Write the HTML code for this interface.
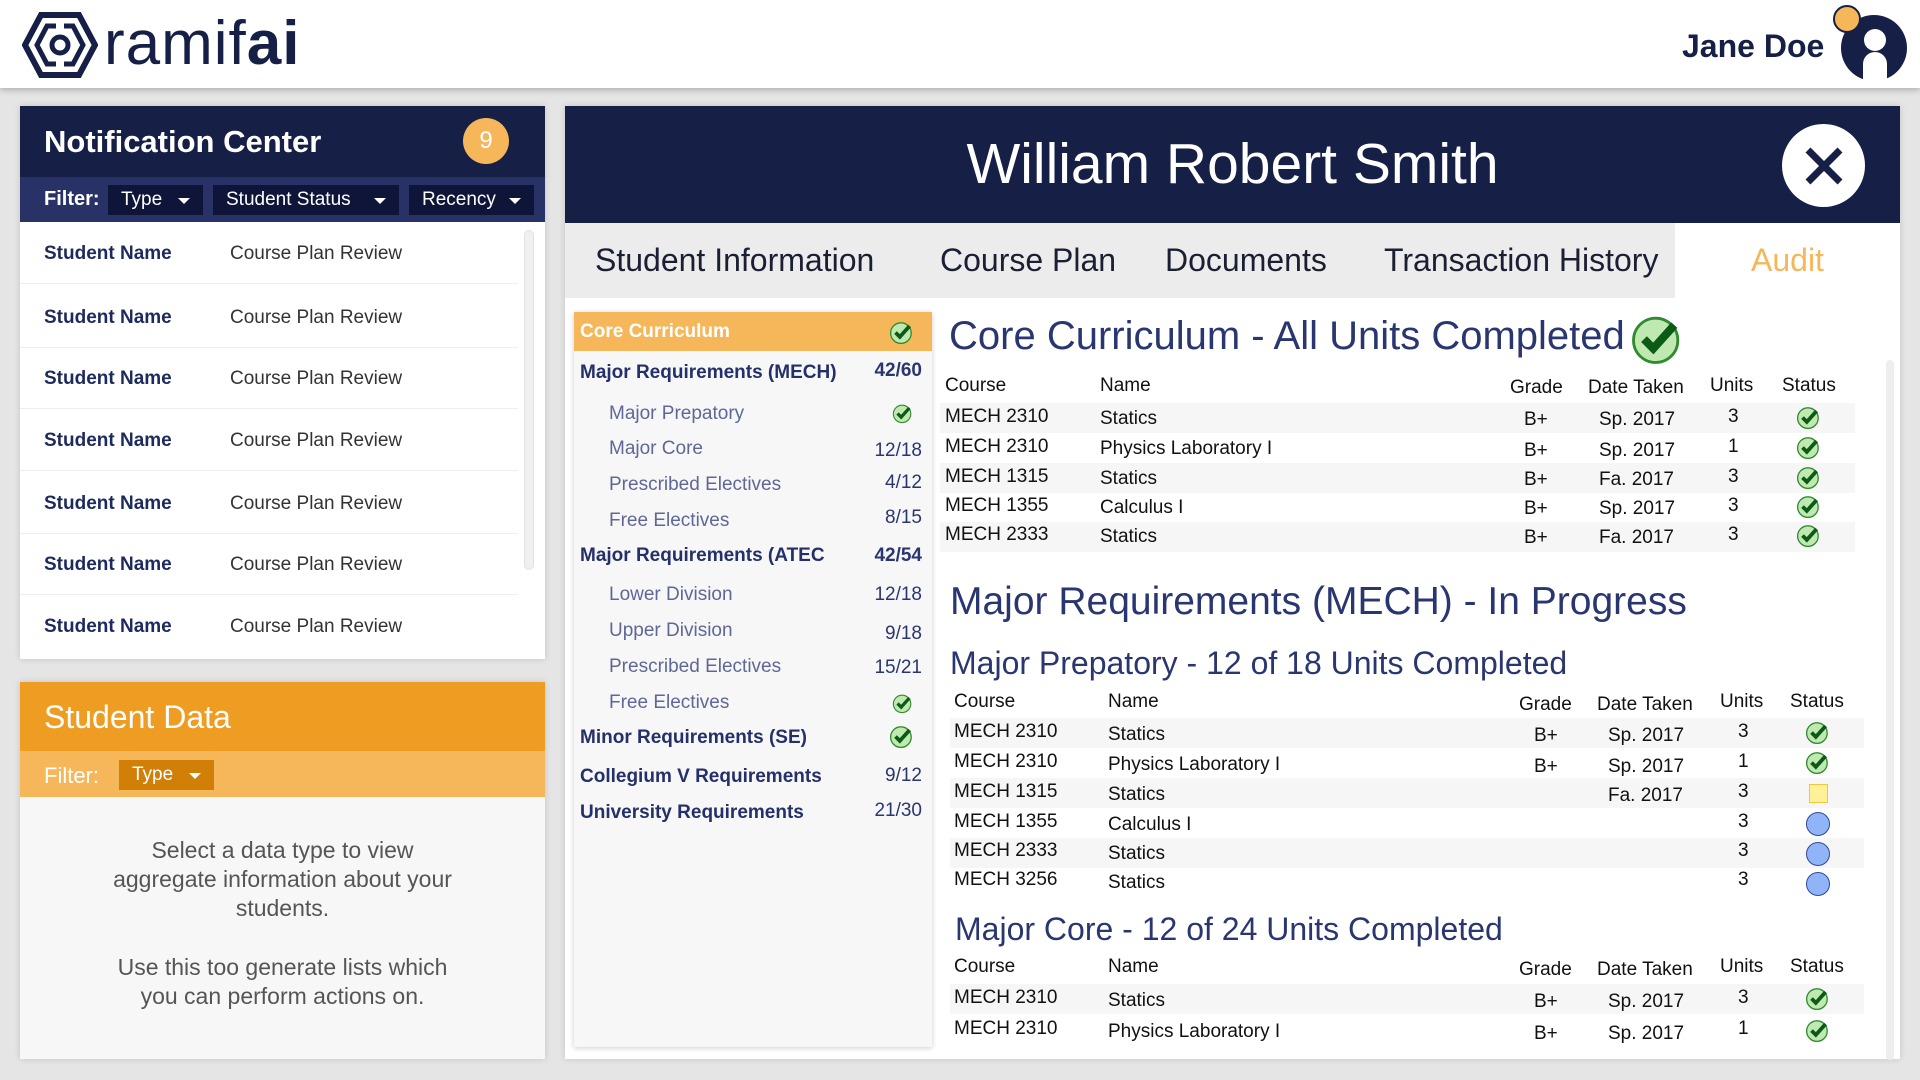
<!DOCTYPE html>
<html><head><meta charset="utf-8"><style>
*{margin:0;padding:0;box-sizing:border-box}
body{width:1920px;height:1080px;background:#e5e5e5;font-family:"Liberation Sans",sans-serif;position:relative;overflow:hidden}
.a{position:absolute;white-space:nowrap}
.hdr{left:0;top:0;width:1920px;height:88px;background:#fff;box-shadow:0 2px 6px rgba(0,0,0,.25)}
.dd{position:absolute;background:#0e1538;color:#fff;font-size:19px;height:30px;line-height:30px;padding-left:13px}
.dd:after{content:"";position:absolute;right:13px;top:13px;border:6px solid transparent;border-top:6px solid #fff;border-bottom:0}
.nr{position:absolute;left:20px;width:498px;height:62px;border-bottom:1px solid #eee;font-size:19px}
.nr b{position:absolute;left:24px;top:21px;color:#1d2a5e}
.nr span{position:absolute;left:210px;top:21px;color:#333}
.sb{position:absolute;font-size:19px;white-space:nowrap}
.bold{left:580px;color:#24306a;font-weight:bold}
.sub{left:609px;color:#5f6797}
.num{right:998px;color:#2a3670;text-align:right}
.t{position:absolute;font-size:19px;color:#111;white-space:nowrap}
.row{position:absolute;height:30px;background:#f6f6f6}
.h1{position:absolute;color:#2a3670;font-size:40px;white-space:nowrap}
.h2{position:absolute;color:#2a3670;font-size:32px;white-space:nowrap}
.tab{position:absolute;font-size:32px;color:#1a1f33;top:242px;white-space:nowrap}
</style></head><body>
<div class="a hdr"></div>
<svg class="a" style="left:22px;top:12px" width="76" height="66" viewBox="0 0 76 66"><polygon points="19,3 57,3 73,33 57,63 19,63 3,33" fill="none" stroke="#161f45" stroke-width="6"/><polygon points="25,14 51,14 61,33 51,52 25,52 15,33" fill="none" stroke="#161f45" stroke-width="5"/><circle cx="38" cy="33" r="8" fill="none" stroke="#161f45" stroke-width="5"/><rect x="34" y="10" width="8" height="10" fill="#fff"/><rect x="34" y="46" width="8" height="10" fill="#fff"/></svg>
<div class="a" style="left:104px;top:8px;font-size:62px;color:#161f45;letter-spacing:1px"><span style="font-weight:300">ramif</span><b>ai</b></div>
<div class="a" style="left:1682px;top:28px;font-size:32px;font-weight:bold;color:#161f45">Jane Doe</div>
<svg class="a" style="left:1832px;top:4px" width="80" height="78" viewBox="0 0 80 78"><circle cx="42" cy="44" r="33" fill="#161f45"/><circle cx="43" cy="36" r="11" fill="#fff"/><path d="M31 78V60a12 12 0 0 1 24 0V78z" fill="#fff"/><circle cx="15" cy="15" r="13" fill="#f5b75a" stroke="#161f45" stroke-width="2"/></svg>

<!-- notification -->
<div class="a" style="left:20px;top:106px;width:525px;height:553px;background:#fff;box-shadow:0 0 6px rgba(0,0,0,.15)"></div>
<div class="a" style="left:20px;top:106px;width:525px;height:71px;background:#161f45"></div>
<div class="a" style="left:44px;top:124px;font-size:31px;color:#fff;font-weight:bold">Notification Center</div>
<div class="a" style="left:463px;top:118px;width:46px;height:46px;border-radius:50%;background:#f5b75a;color:#fff;font-size:24px;text-align:center;line-height:46px">9</div>
<div class="a" style="left:20px;top:177px;width:525px;height:45px;background:#283266"></div>
<div class="a" style="left:44px;top:188px;font-size:20px;color:#fff;font-weight:bold">Filter:</div>
<div class="dd" style="left:108px;top:185px;width:95px">Type</div>
<div class="dd" style="left:213px;top:185px;width:186px">Student Status</div>
<div class="dd" style="left:409px;top:185px;width:125px">Recency</div>
<div class="nr" style="top:222px"><b>Student Name</b><span>Course Plan Review</span></div>
<div class="nr" style="top:286px"><b>Student Name</b><span>Course Plan Review</span></div>
<div class="nr" style="top:347px"><b>Student Name</b><span>Course Plan Review</span></div>
<div class="nr" style="top:409px"><b>Student Name</b><span>Course Plan Review</span></div>
<div class="nr" style="top:472px"><b>Student Name</b><span>Course Plan Review</span></div>
<div class="nr" style="top:533px"><b>Student Name</b><span>Course Plan Review</span></div>
<div class="nr" style="top:595px;border:0"><b>Student Name</b><span>Course Plan Review</span></div>
<div class="a" style="left:524px;top:230px;width:10px;height:340px;border-radius:5px;background:#f0f0f0;border:1px solid #e2e2e2"></div>

<!-- student data -->
<div class="a" style="left:20px;top:682px;width:525px;height:377px;background:#f7f7f7;box-shadow:0 0 6px rgba(0,0,0,.15)"></div>
<div class="a" style="left:20px;top:682px;width:525px;height:69px;background:#ef9c22"></div>
<div class="a" style="left:44px;top:699px;font-size:32px;color:#fff">Student Data</div>
<div class="a" style="left:20px;top:751px;width:525px;height:46px;background:#f5b75a"></div>
<div class="a" style="left:44px;top:763px;font-size:22px;color:#fff">Filter:</div>
<div class="dd" style="left:119px;top:760px;width:95px;background:#d17f07">Type</div>
<div class="a" style="left:20px;top:836px;width:525px;text-align:center;font-size:23px;color:#555;line-height:29px;white-space:normal">Select a data type to view<br>aggregate information about your<br>students.<br><div style="height:30px"></div>Use this too generate lists which<br>you can perform actions on.</div>

<!-- main -->
<div class="a" style="left:565px;top:106px;width:1335px;height:953px;background:#fff;box-shadow:0 0 6px rgba(0,0,0,.15)"></div>
<div class="a" style="left:565px;top:106px;width:1335px;height:117px;background:#161f45"></div>
<div class="a" style="left:565px;top:131px;width:1335px;text-align:center;font-size:57px;color:#fff;font-weight:300">William Robert Smith</div>
<div class="a" style="left:1782px;top:124px;width:83px;height:83px;border-radius:50%;background:#fff"></div>
<svg class="a" style="left:1804px;top:146px" width="40" height="40" viewBox="0 0 40 40"><path d="M4 4L36 36M36 4L4 36" stroke="#161f45" stroke-width="7"/></svg>
<div class="a" style="left:565px;top:223px;width:1110px;height:75px;background:#ececec"></div>
<div class="tab" style="left:595px">Student Information</div>
<div class="tab" style="left:940px">Course Plan</div>
<div class="tab" style="left:1165px">Documents</div>
<div class="tab" style="left:1384px">Transaction History</div>
<div class="tab" style="left:1751px;color:#f5b75a">Audit</div>
<div class="a" style="left:1886px;top:360px;width:8px;height:700px;background:#eee;border-radius:4px"></div>

<!-- sidebar -->
<div class="a" style="left:574px;top:312px;width:358px;height:735px;background:#f7f7f7;box-shadow:0 1px 5px rgba(0,0,0,.2)"></div>
<div class="a" style="left:574px;top:312px;width:358px;height:39px;background:#f5b75a"></div>
<div class="sb" style="left:580px;top:321px;color:#fff;font-weight:bold">Core Curriculum</div>
<svg class="a" style="left:889px;top:319px" width="26" height="26" viewBox="0 0 24 24"><circle cx="11" cy="13" r="9.5" fill="#bfe9b0" stroke="#2e8b2e" stroke-width="1.2"/><path d="M6 12.5l4 4 9-10" stroke="#0b5a16" stroke-width="3.5" fill="none"/></svg>
<div class="sb bold" style="top:362px">Major Requirements (MECH)</div><div class="sb num" style="top:360px;font-weight:bold">42/60</div>
<div class="sb sub" style="top:403px">Major Prepatory</div>
<svg class="a" style="left:892px;top:402px" width="22" height="22" viewBox="0 0 24 24"><circle cx="11" cy="13" r="9.5" fill="#bfe9b0" stroke="#2e8b2e" stroke-width="1.2"/><path d="M6 12.5l4 4 9-10" stroke="#0b5a16" stroke-width="3.5" fill="none"/></svg>
<div class="sb sub" style="top:438px">Major Core</div><div class="sb num" style="top:440px">12/18</div>
<div class="sb sub" style="top:474px">Prescribed Electives</div><div class="sb num" style="top:472px">4/12</div>
<div class="sb sub" style="top:510px">Free Electives</div><div class="sb num" style="top:507px">8/15</div>
<div class="sb bold" style="top:545px">Major Requirements (ATEC</div><div class="sb num" style="top:545px;font-weight:bold">42/54</div>
<div class="sb sub" style="top:584px">Lower Division</div><div class="sb num" style="top:584px">12/18</div>
<div class="sb sub" style="top:620px">Upper Division</div><div class="sb num" style="top:623px">9/18</div>
<div class="sb sub" style="top:656px">Prescribed Electives</div><div class="sb num" style="top:657px">15/21</div>
<div class="sb sub" style="top:692px">Free Electives</div>
<svg class="a" style="left:892px;top:692px" width="22" height="22" viewBox="0 0 24 24"><circle cx="11" cy="13" r="9.5" fill="#bfe9b0" stroke="#2e8b2e" stroke-width="1.2"/><path d="M6 12.5l4 4 9-10" stroke="#0b5a16" stroke-width="3.5" fill="none"/></svg>
<div class="sb bold" style="top:727px">Minor Requirements (SE)</div>
<svg class="a" style="left:889px;top:723px" width="26" height="26" viewBox="0 0 24 24"><circle cx="11" cy="13" r="9.5" fill="#bfe9b0" stroke="#2e8b2e" stroke-width="1.2"/><path d="M6 12.5l4 4 9-10" stroke="#0b5a16" stroke-width="3.5" fill="none"/></svg>
<div class="sb bold" style="top:766px">Collegium V Requirements</div><div class="sb num" style="top:765px">9/12</div>
<div class="sb bold" style="top:802px">University Requirements</div><div class="sb num" style="top:800px">21/30</div>

<!-- content -->
<div class="h1" style="left:949px;top:314px">Core Curriculum - All Units Completed</div>
<svg class="a" style="left:1630px;top:310px" width="56" height="56" viewBox="0 0 24 24"><circle cx="11" cy="13" r="9.5" fill="#bfe9b0" stroke="#2e8b2e" stroke-width="1.2"/><path d="M6 12.5l4 4 9-10" stroke="#0b5a16" stroke-width="3.5" fill="none"/></svg>

<div class="row" style="left:940px;top:403px;width:915px"></div>
<div class="row" style="left:940px;top:463px;width:915px"></div>
<div class="row" style="left:940px;top:522px;width:915px"></div>
<div class="t" style="left:945px;top:375px">Course</div><div class="t" style="left:1100px;top:375px">Name</div>
<div class="t" style="left:1510px;top:377px">Grade</div><div class="t" style="left:1588px;top:377px">Date Taken</div><div class="t" style="left:1710px;top:375px">Units</div><div class="t" style="left:1782px;top:375px">Status</div>

<div class="h1" style="left:950px;top:580px;font-size:39px">Major Requirements (MECH) - In Progress</div>
<div class="h2" style="left:950px;top:645px">Major Prepatory - 12 of 18 Units Completed</div>
<div class="t" style="left:954px;top:691px">Course</div><div class="t" style="left:1108px;top:691px">Name</div>
<div class="t" style="left:1519px;top:694px">Grade</div><div class="t" style="left:1597px;top:694px">Date Taken</div><div class="t" style="left:1720px;top:691px">Units</div><div class="t" style="left:1790px;top:691px">Status</div>
<div class="row" style="left:950px;top:718px;width:914px"></div>
<div class="row" style="left:950px;top:778px;width:914px"></div>
<div class="row" style="left:950px;top:838px;width:914px"></div>

<div class="h2" style="left:955px;top:911px">Major Core - 12 of 24 Units Completed</div>
<div class="t" style="left:954px;top:956px">Course</div><div class="t" style="left:1108px;top:956px">Name</div>
<div class="t" style="left:1519px;top:959px">Grade</div><div class="t" style="left:1597px;top:959px">Date Taken</div><div class="t" style="left:1720px;top:956px">Units</div><div class="t" style="left:1790px;top:956px">Status</div>
<div class="row" style="left:950px;top:984px;width:914px"></div>

<!-- table rows -->
<div class="t" style="left:945px;top:406px">MECH 2310</div><div class="t" style="left:1100px;top:408px">Statics</div><div class="t" style="left:1524px;top:409px">B+</div><div class="t" style="left:1599px;top:409px">Sp. 2017</div><div class="t" style="left:1728px;top:406px">3</div>
<div class="t" style="left:945px;top:436px">MECH 2310</div><div class="t" style="left:1100px;top:438px">Physics Laboratory I</div><div class="t" style="left:1524px;top:440px">B+</div><div class="t" style="left:1599px;top:440px">Sp. 2017</div><div class="t" style="left:1728px;top:436px">1</div>
<div class="t" style="left:945px;top:466px">MECH 1315</div><div class="t" style="left:1100px;top:468px">Statics</div><div class="t" style="left:1524px;top:469px">B+</div><div class="t" style="left:1599px;top:469px">Fa. 2017</div><div class="t" style="left:1728px;top:466px">3</div>
<div class="t" style="left:945px;top:495px">MECH 1355</div><div class="t" style="left:1100px;top:497px">Calculus I</div><div class="t" style="left:1524px;top:498px">B+</div><div class="t" style="left:1599px;top:498px">Sp. 2017</div><div class="t" style="left:1728px;top:495px">3</div>
<div class="t" style="left:945px;top:524px">MECH 2333</div><div class="t" style="left:1100px;top:526px">Statics</div><div class="t" style="left:1524px;top:527px">B+</div><div class="t" style="left:1599px;top:527px">Fa. 2017</div><div class="t" style="left:1728px;top:524px">3</div>
<svg class="a" style="left:1796px;top:404px" width="26" height="26" viewBox="0 0 24 24"><circle cx="11" cy="13" r="9.5" fill="#bfe9b0" stroke="#2e8b2e" stroke-width="1.2"/><path d="M6 12.5l4 4 9-10" stroke="#0b5a16" stroke-width="3.5" fill="none"/></svg>
<svg class="a" style="left:1796px;top:434px" width="26" height="26" viewBox="0 0 24 24"><circle cx="11" cy="13" r="9.5" fill="#bfe9b0" stroke="#2e8b2e" stroke-width="1.2"/><path d="M6 12.5l4 4 9-10" stroke="#0b5a16" stroke-width="3.5" fill="none"/></svg>
<svg class="a" style="left:1796px;top:464px" width="26" height="26" viewBox="0 0 24 24"><circle cx="11" cy="13" r="9.5" fill="#bfe9b0" stroke="#2e8b2e" stroke-width="1.2"/><path d="M6 12.5l4 4 9-10" stroke="#0b5a16" stroke-width="3.5" fill="none"/></svg>
<svg class="a" style="left:1796px;top:493px" width="26" height="26" viewBox="0 0 24 24"><circle cx="11" cy="13" r="9.5" fill="#bfe9b0" stroke="#2e8b2e" stroke-width="1.2"/><path d="M6 12.5l4 4 9-10" stroke="#0b5a16" stroke-width="3.5" fill="none"/></svg>
<svg class="a" style="left:1796px;top:522px" width="26" height="26" viewBox="0 0 24 24"><circle cx="11" cy="13" r="9.5" fill="#bfe9b0" stroke="#2e8b2e" stroke-width="1.2"/><path d="M6 12.5l4 4 9-10" stroke="#0b5a16" stroke-width="3.5" fill="none"/></svg>

<div class="t" style="left:954px;top:721px">MECH 2310</div><div class="t" style="left:1108px;top:724px">Statics</div><div class="t" style="left:1534px;top:725px">B+</div><div class="t" style="left:1608px;top:725px">Sp. 2017</div><div class="t" style="left:1738px;top:721px">3</div>
<div class="t" style="left:954px;top:751px">MECH 2310</div><div class="t" style="left:1108px;top:754px">Physics Laboratory I</div><div class="t" style="left:1534px;top:756px">B+</div><div class="t" style="left:1608px;top:756px">Sp. 2017</div><div class="t" style="left:1738px;top:751px">1</div>
<div class="t" style="left:954px;top:781px">MECH 1315</div><div class="t" style="left:1108px;top:784px">Statics</div><div class="t" style="left:1608px;top:785px">Fa. 2017</div><div class="t" style="left:1738px;top:781px">3</div>
<div class="t" style="left:954px;top:811px">MECH 1355</div><div class="t" style="left:1108px;top:814px">Calculus I</div><div class="t" style="left:1738px;top:811px">3</div>
<div class="t" style="left:954px;top:840px">MECH 2333</div><div class="t" style="left:1108px;top:843px">Statics</div><div class="t" style="left:1738px;top:840px">3</div>
<div class="t" style="left:954px;top:869px">MECH 3256</div><div class="t" style="left:1108px;top:872px">Statics</div><div class="t" style="left:1738px;top:869px">3</div>
<svg class="a" style="left:1805px;top:719px" width="26" height="26" viewBox="0 0 24 24"><circle cx="11" cy="13" r="9.5" fill="#bfe9b0" stroke="#2e8b2e" stroke-width="1.2"/><path d="M6 12.5l4 4 9-10" stroke="#0b5a16" stroke-width="3.5" fill="none"/></svg>
<svg class="a" style="left:1805px;top:749px" width="26" height="26" viewBox="0 0 24 24"><circle cx="11" cy="13" r="9.5" fill="#bfe9b0" stroke="#2e8b2e" stroke-width="1.2"/><path d="M6 12.5l4 4 9-10" stroke="#0b5a16" stroke-width="3.5" fill="none"/></svg>
<div class="a" style="left:1809px;top:784px;width:19px;height:19px;background:#fff197;border:1px solid #f5c542"></div>
<div class="a" style="left:1806px;top:812px;width:24px;height:24px;border-radius:50%;background:#91b4f9;border:1px solid #2c4a9c"></div>
<div class="a" style="left:1806px;top:842px;width:24px;height:24px;border-radius:50%;background:#91b4f9;border:1px solid #2c4a9c"></div>
<div class="a" style="left:1806px;top:872px;width:24px;height:24px;border-radius:50%;background:#91b4f9;border:1px solid #2c4a9c"></div>

<div class="t" style="left:954px;top:987px">MECH 2310</div><div class="t" style="left:1108px;top:990px">Statics</div><div class="t" style="left:1534px;top:991px">B+</div><div class="t" style="left:1608px;top:991px">Sp. 2017</div><div class="t" style="left:1738px;top:987px">3</div>
<div class="t" style="left:954px;top:1018px">MECH 2310</div><div class="t" style="left:1108px;top:1021px">Physics Laboratory I</div><div class="t" style="left:1534px;top:1023px">B+</div><div class="t" style="left:1608px;top:1023px">Sp. 2017</div><div class="t" style="left:1738px;top:1018px">1</div>
<svg class="a" style="left:1805px;top:985px" width="26" height="26" viewBox="0 0 24 24"><circle cx="11" cy="13" r="9.5" fill="#bfe9b0" stroke="#2e8b2e" stroke-width="1.2"/><path d="M6 12.5l4 4 9-10" stroke="#0b5a16" stroke-width="3.5" fill="none"/></svg>
<svg class="a" style="left:1805px;top:1017px" width="26" height="26" viewBox="0 0 24 24"><circle cx="11" cy="13" r="9.5" fill="#bfe9b0" stroke="#2e8b2e" stroke-width="1.2"/><path d="M6 12.5l4 4 9-10" stroke="#0b5a16" stroke-width="3.5" fill="none"/></svg>
</body></html>
